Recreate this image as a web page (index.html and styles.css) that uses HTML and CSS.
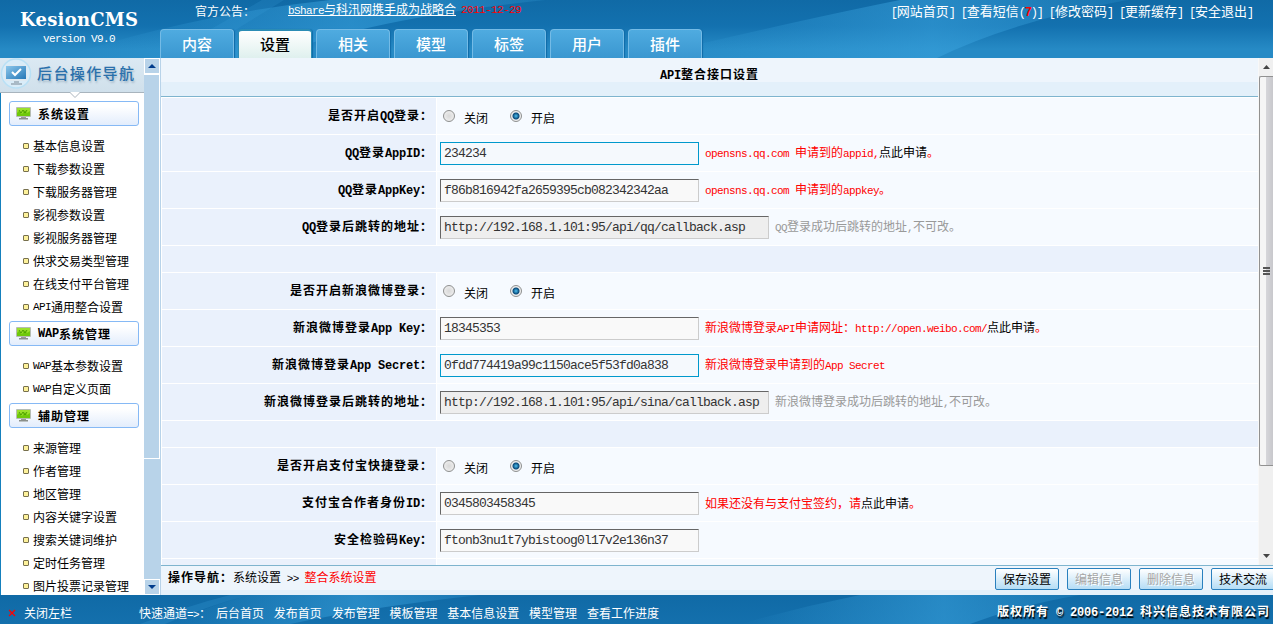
FILE: index.html
```html
<!DOCTYPE html>
<html lang="zh-CN">
<head>
  <meta charset="UTF-8" />
  <title>KesionCMS</title>
  <link rel="stylesheet" href="styles.css">
</head>
<body>
  <svg width="0" height="0" class="defs">
    <defs>
      <linearGradient id="screenBlue" x1="0" y1="0" x2="1" y2="1">
        <stop offset="0" stop-color="#8cc6ea"/><stop offset="1" stop-color="#2478b8"/>
      </linearGradient>
      <linearGradient id="glow" x1="0" y1="0" x2="1" y2="0">
        <stop offset="0" stop-color="#3aa3de" stop-opacity="0"/><stop offset=".6" stop-color="#3aa3de" stop-opacity=".55"/><stop offset="1" stop-color="#3aa3de" stop-opacity=".2"/>
      </linearGradient>
      <symbol id="pc" viewBox="0 0 15 13">
        <rect width="15" height="10" rx="1" fill="#b5bcb3"/>
        <rect x="1" y="1" width="13" height="8" fill="#6fc80a"/>
        <path d="M1 1h13v3l-3 2-2-3-3 4-3-3-2 2z" fill="#9be02c"/>
        <path d="M3 3l2 3 2-3 2 3 2-3" fill="none" stroke="#4da000"/>
        <rect x="5" y="10" width="5" height="1" fill="#999"/>
        <rect x="3" y="11" width="9" height="1.5" fill="#8a8f8a"/>
      </symbol>
    </defs>
  </svg>

  <div class="header">
    <svg class="wave" width="1273" height="58">
      <path d="M270 58Q360 20 545 0H330Q190 15 60 58z" fill="url(#glow)"/>
      <path d="M160 58L262 0h22L190 58z" fill="#3aa0da" opacity=".2"/>
      <path d="M937 58Q1010 22 1127 0H900Q800 20 640 58z" fill="url(#glow)"/>
    </svg>
    <div class="logo">
      <div class="name">KesionCMS</div>
      <div class="version en">version V9.0</div>
    </div>
    <div class="header-main">
      <div class="topline">
        <span class="notice">官方公告：</span>
        <a class="news"><span class="en">bShare</span>与科汛网携手成为战略合</a>
        <span class="date en">2011-12-29</span>
        <div class="toplinks">
          <a><i>[</i>网站首页<i>]</i></a>
          <a><i>[</i>查看短信<i>(<b>7</b>)]</i></a>
          <a><i>[</i>修改密码<i>]</i></a>
          <a><i>[</i>更新缓存<i>]</i></a>
          <a><i>[</i>安全退出<i>]</i></a>
        </div>
      </div>
      <div class="tabs">
        <a>内容</a>
        <a class="active">设置</a>
        <a>相关</a>
        <a>模型</a>
        <a>标签</a>
        <a>用户</a>
        <a>插件</a>
      </div>
    </div>
  </div>

  <div class="middle">
    <div class="sidebar">
      <div class="side-title">
        <svg width="32" height="32" viewBox="0 0 32 32">
          <circle cx="16" cy="15.5" r="14.5" fill="#d9ecf8" stroke="#b9e0f5" stroke-width="1.5"/>
          <rect x="5" y="7" width="22" height="16" rx="1" fill="#dfe9f0"/>
          <rect x="6" y="8" width="20" height="13" fill="url(#screenBlue)"/>
          <path d="M12 14l3 3 6-6" fill="none" stroke="#fff" stroke-width="2"/>
          <path d="M14 23h5v2h3v2H11v-2h3z" fill="#a9bac6"/>
        </svg>
        <span>后台操作导航</span>
        <svg class="notch" width="10" height="6"><path d="M0 0h10L5 5.5z" fill="#fff"/><path d="M0 .5L5 5.5 10 .5" fill="none" stroke="#aab4bd"/></svg>
      </div>
      <div class="menu">
        <h3><svg width="15" height="13"><use href="#pc"/></svg>系统设置</h3>
        <ul>
          <li>基本信息设置</li>
          <li>下载参数设置</li>
          <li>下载服务器管理</li>
          <li>影视参数设置</li>
          <li>影视服务器管理</li>
          <li>供求交易类型管理</li>
          <li>在线支付平台管理</li>
          <li><span class="en">API</span>通用整合设置</li>
        </ul>
        <h3><svg width="15" height="13"><use href="#pc"/></svg><span class="en">WAP</span>系统管理</h3>
        <ul>
          <li><span class="en">WAP</span>基本参数设置</li>
          <li><span class="en">WAP</span>自定义页面</li>
        </ul>
        <h3><svg width="15" height="13"><use href="#pc"/></svg>辅助管理</h3>
        <ul>
          <li>来源管理</li>
          <li>作者管理</li>
          <li>地区管理</li>
          <li>内容关键字设置</li>
          <li>搜索关键词维护</li>
          <li>定时任务管理</li>
          <li>图片投票记录管理</li>
        </ul>
      </div>
    </div>

    <div class="side-scroll">
      <div class="arrow"><svg width="8" height="4"><path d="M0 4L4 0l4 4z" fill="#003c8c"/></svg></div>
      <div class="thumb"></div>
      <div class="arrow down"><svg width="8" height="4"><path d="M0 0h8L4 4z" fill="#003c8c"/></svg></div>
    </div>

    <div class="main">
      <div class="frame">
        <div class="page">
          <div class="title"><span class="en">API</span>整合接口设置</div>
          <div class="form">
            <div class="row">
              <label>是否开启<span class="en">QQ</span>登录：</label>
              <div class="field"><span class="radio"></span><span class="opt">关闭</span><span class="radio on"></span><span class="opt">开启</span></div>
            </div>
            <div class="row">
              <label><span class="en">QQ</span>登录<span class="en">AppID</span>：</label>
              <div class="field"><input type="text" class="focus" value="234234"><span class="tips"><span class="en">opensns.qq.com </span>申请到的<span class="en">appid,</span><a>点此申请</a>。</span></div>
            </div>
            <div class="row">
              <label><span class="en">QQ</span>登录<span class="en">AppKey</span>：</label>
              <div class="field"><input type="text" value="f86b816942fa2659395cb082342342aa"><span class="tips"><span class="en">opensns.qq.com </span>申请到的<span class="en">appkey</span>。</span></div>
            </div>
            <div class="row">
              <label><span class="en">QQ</span>登录后跳转的地址：</label>
              <div class="field"><input type="text" class="long" readonly value="http://192.168.1.101:95/api/qq/callback.asp"><span class="tips gray"><span class="en">QQ</span>登录成功后跳转的地址<span class="en">,</span>不可改。</span></div>
            </div>
            <div class="space"></div>
            <div class="row">
              <label>是否开启新浪微博登录：</label>
              <div class="field"><span class="radio"></span><span class="opt">关闭</span><span class="radio on"></span><span class="opt">开启</span></div>
            </div>
            <div class="row">
              <label>新浪微博登录<span class="en">App Key</span>：</label>
              <div class="field"><input type="text" value="18345353"><span class="tips">新浪微博登录<span class="en">API</span>申请网址：<span class="en">http://open.weibo.com/</span><a>点此申请</a>。</span></div>
            </div>
            <div class="row">
              <label>新浪微博登录<span class="en">App Secret</span>：</label>
              <div class="field"><input type="text" class="focus" value="0fdd774419a99c1150ace5f53fd0a838"><span class="tips">新浪微博登录申请到的<span class="en">App Secret</span></span></div>
            </div>
            <div class="row">
              <label>新浪微博登录后跳转的地址：</label>
              <div class="field"><input type="text" class="long" readonly value="http://192.168.1.101:95/api/sina/callback.asp"><span class="tips gray">新浪微博登录成功后跳转的地址<span class="en">,</span>不可改。</span></div>
            </div>
            <div class="space"></div>
            <div class="row">
              <label>是否开启支付宝快捷登录：</label>
              <div class="field"><span class="radio"></span><span class="opt">关闭</span><span class="radio on"></span><span class="opt">开启</span></div>
            </div>
            <div class="row">
              <label>支付宝合作者身份<span class="en">ID</span>：</label>
              <div class="field"><input type="text" value="0345803458345"><span class="tips">如果还没有与支付宝签约，请<a>点此申请</a>。</span></div>
            </div>
            <div class="row">
              <label>安全检验码<span class="en">Key</span>：</label>
              <div class="field"><input type="text" value="ftonb3nu1t7ybistoog0l17v2e136n37"></div>
            </div>
            <div class="row">
              <label></label>
              <div class="field"></div>
            </div>
          </div>
        </div>
        <div class="page-scroll">
          <div class="sb-arrow"><svg width="7" height="4"><path d="M0 4L3.5 0 7 4z" fill="#444"/></svg></div>
          <div class="sb-thumb"><span></span><span></span><span></span></div>
          <div class="sb-arrow end"><svg width="7" height="4"><path d="M0 0h7L3.5 4z" fill="#444"/></svg></div>
        </div>
      </div>
      <div class="opbar">
        <div class="crumb"><b>操作导航：</b>系统设置 <span class="en">&gt;&gt;</span> <em>整合系统设置</em></div>
        <div class="btns">
          <button>保存设置</button>
          <button disabled>编辑信息</button>
          <button disabled>删除信息</button>
          <button>技术交流</button>
        </div>
      </div>
    </div>
  </div>

  <div class="footer">
    <svg class="wave" width="1273" height="29">
      <path d="M140 29Q190 10 230 0h20Q210 10 165 29z" fill="#3aa0da" opacity=".25"/>
      <path d="M290 29Q370 12 480 0H250Q210 10 170 29z" fill="url(#glow)"/>
      <path d="M970 29Q1020 10 1080 0H860Q800 12 740 29z" fill="url(#glow)"/>
    </svg>
    <svg class="close" width="8" height="8" viewBox="0 0 8 8">
      <line x1="1" y1="1" x2="7" y2="7" stroke="#f00" stroke-width="1.2"/>
      <line x1="7" y1="1" x2="1" y2="7" stroke="#f00" stroke-width="1.2"/>
    </svg>
    <a class="close-text">关闭左栏</a>
    <span class="quick">快速通道<span class="en">=&gt;</span>：</span>
    <div class="quick-links">
      <a>后台首页</a>
      <a>发布首页</a>
      <a>发布管理</a>
      <a>模板管理</a>
      <a>基本信息设置</a>
      <a>模型管理</a>
      <a>查看工作进度</a>
    </div>
    <div class="copyright">版权所有<span class="en"> © 2006-2012 </span>科兴信息技术有限公司</div>
  </div>
</body>
</html>
```
FILE: styles.css
```css
* {
  box-sizing: border-box;
}

body {
  margin: 0;
  width: 1273px;
  height: 624px;
  overflow: hidden;
  font: 12px/16px "Noto Sans CJK SC", sans-serif;
  color: #000;
  background: #fff;
}

.defs {
  position: absolute;
}

/* half-width latin, 6px a char (7px in bold text) */
.en {
  font-family: "Liberation Mono", monospace;
  font-size: 11px;
  letter-spacing: -0.6px;
  white-space: pre;
}

/* header */
.header {
  position: relative;
  display: flex;
  height: 58px;
  color: #fff;
  background: linear-gradient(#106aa6, #1371af 45%, #268ac5 85%);
  overflow: hidden;
}

.wave {
  position: absolute;
  left: 0;
  top: 0;
}

.logo {
  position: relative;
  width: 160px;
  padding: 9px 0 0 20px;
}

.logo .name {
  font: bold 18px/22px "DejaVu Serif", serif;
  letter-spacing: 0.25px;
  white-space: nowrap;
}

.logo .version {
  padding: 0 0 0 23px;
  line-height: 16px;
}

.header-main {
  position: relative;
  flex: 1;
}

.topline {
  display: flex;
  height: 29px;
  padding-left: 35px;
  line-height: 22px;
}

.notice {
  width: 93px;
}

.news {
  height: 16px;
  margin-right: 5px;
  line-height: 18px;
  border-bottom: 1px solid #fff;
}

.date {
  color: #f00;
  line-height: 20px;
}

.toplinks {
  display: flex;
  gap: 6px;
  margin-left: auto;
  padding-right: 20px;
  font-size: 13px;
  line-height: 21px;
}

.toplinks i {
  font: 12px/21px "Liberation Mono", monospace;
  letter-spacing: -1.2px;
}

.toplinks b {
  color: #f00;
}

.tabs {
  display: flex;
  gap: 4px;
}

.tabs a {
  width: 74px;
  height: 29px;
  border: 1px solid #74bbe6;
  border-bottom: 0;
  border-radius: 4px 4px 0 0;
  box-shadow: 1px 0 1px #0f6ba8;
  background: linear-gradient(#4fabe0, #3a97d0);
  font-size: 15px;
  font-weight: 500;
  line-height: 27px;
  text-align: center;
}

.tabs .active {
  border-color: #2b8cb5;
  border-top-width: 2px;
  background: linear-gradient(#fff, #dff0ee);
  color: #000;
  line-height: 25px;
}

/* middle */
.middle {
  display: flex;
  height: 537px;
}

.sidebar {
  width: 144px;
  overflow: hidden;
}

.side-title {
  position: relative;
  display: flex;
  height: 35px;
  border-bottom: 1px solid #a8b4bd;
  background: linear-gradient(#dbe9f3, #d0e0eb);
}

.side-title span {
  padding-left: 5px;
  font-size: 15px;
  letter-spacing: 1.4px;
  font-weight: 500;
  line-height: 29px;
  color: #2a70ab;
  text-shadow: 1px 2px 2px #a9bccb;
}

.notch {
  position: absolute;
  left: 70px;
  top: 34px;
}

.menu {
  height: 502px;
  padding: 8px 5px 0 8px;
  border-left: 1px solid #1580bd;
}

.menu h3 {
  display: flex;
  align-items: center;
  height: 25px;
  margin: 0;
  padding-left: 6px;
  border: 1px solid #86b9f5;
  border-radius: 3px;
  background: linear-gradient(#fff 20%, #e3edfc);
  font-size: 12px;
  letter-spacing: 1px;
}

.menu h3 svg {
  margin-right: 7px;
}

.menu ul {
  margin: 0;
  padding: 8px 0 3px 14px;
  list-style: none;
}

.menu li {
  display: flex;
  align-items: center;
  height: 23px;
  white-space: nowrap;
}

.menu li::before {
  content: "";
  width: 6px;
  height: 6px;
  margin-right: 4px;
  border: 1px solid #77704e;
  border-radius: 1px;
  background: #fdf19a;
  box-sizing: border-box;
}

.menu h3 .en,
.row label .en,
.title .en,
.copyright .en {
  font-size: 12px;
  letter-spacing: -0.2px;
}

.side-scroll {
  display: flex;
  flex-direction: column;
  width: 16px;
  background: #b8d3e9;
}

.arrow {
  display: flex;
  align-items: center;
  justify-content: center;
  height: 16px;
  border: 1px solid #fff;
}

.arrow.down {
  margin-top: auto;
}

.thumb {
  height: 385px;
  border: 1px solid #fff;
  border-left: 0;
}

.main {
  display: flex;
  flex-direction: column;
  width: 1113px;
  border-left: 1px solid #b8d3e9;
}

.frame {
  display: flex;
  height: 507px;
}

.page {
  width: 1097px;
  overflow: hidden;
}

.title {
  height: 39px;
  border-bottom: 1px solid #7eb4ce;
  background: linear-gradient(#eef5fc 24px, #e3f0fa 24px);
  font-weight: bold;
  line-height: 32px;
  letter-spacing: 1px;
  text-align: center;
}

.form {
  padding: 1px 0 0 1px;
}

.row {
  display: flex;
  height: 37px;
  border-bottom: 1px solid #fff;
}

.row label {
  width: 274px;
  padding-right: 3px;
  background: #eaf1fc;
  font-weight: bold;
  letter-spacing: 1px;
  line-height: 34px;
  text-align: right;
}

.field {
  display: flex;
  align-items: center;
  flex: 1;
  margin-left: 1px;
  padding-left: 3px;
  background: #f6faff;
}

.field input {
  width: 259px;
  height: 23px;
  margin-top: 1px;
  padding: 0 3px;
  border: 1px solid #ccc;
  border-top-color: #666;
  border-left-color: #666;
  background: #f9f9f9;
  color: #333;
  font: 13px "Liberation Mono", monospace;
  letter-spacing: -0.8px;
  outline: none;
}

.field .focus {
  border-color: #09c;
  background: #f5f9fd;
}

.field .long {
  width: 329px;
  background: #eee;
}

.tips {
  padding-left: 6px;
  color: #f00;
}

.tips a {
  color: #000;
}

.gray {
  color: #999;
}

.space {
  height: 27px;
  border-bottom: 1px solid #fff;
  background: #eaf1fc;
}

.radio {
  width: 12px;
  height: 12px;
  margin: 0 9px 0 3px;
  border: 1px solid #8e8f8f;
  border-radius: 50%;
  background: radial-gradient(#d8d8d8, #f4f4f4);
}

.radio.on {
  background: radial-gradient(circle at 50% 50%, #4cc0f0 0, #0a4a7a 3px, #eee 4px);
}

.opt {
  width: 43px;
  padding-top: 3px;
}

.page-scroll {
  display: flex;
  flex-direction: column;
  width: 15px;
  border-left: 1px solid #f8f8f8;
  background: #f0f0f0;
}

.sb-arrow {
  display: flex;
  align-items: center;
  justify-content: center;
  height: 18px;
}

.sb-arrow.end {
  margin-top: auto;
}

.sb-thumb {
  display: flex;
  flex-direction: column;
  align-items: center;
  justify-content: center;
  gap: 1px;
  height: 390px;
  border: 1px solid #919191;
  border-right: 0;
  border-radius: 2px 0 0 2px;
  background: linear-gradient(90deg, #f5f5f5 45%, #d5d5d9 50%, #c8c8cc);
}

.sb-thumb span {
  width: 7px;
  height: 2px;
  background: #555;
}

.opbar {
  display: flex;
  height: 30px;
  border-top: 1px solid #7eb4ce;
  background: linear-gradient(#eef5fc 24px, #e3f0fa 24px);
  overflow: hidden;
}

.crumb {
  flex: none;
  width: 834px;
  padding-left: 7px;
  line-height: 22px;
  word-spacing: 3px;
}

.crumb b {
  letter-spacing: 1px;
}

.crumb em {
  color: #f00;
  font-style: normal;
}

.btns {
  display: flex;
  gap: 8px;
  padding-top: 2px;
}

.btns button {
  flex: none;
  width: 64px;
  height: 22px;
  padding: 0;
  border: 1px solid #2a80be;
  border-radius: 2px;
  background: linear-gradient(#fff, #b5ddf5);
  color: #000;
  font: 12px/18px "Noto Sans CJK SC", sans-serif;
}

.btns button:disabled {
  color: #a5a5a5;
  text-shadow: 1px 1px #fff;
}

/* footer */
.footer {
  position: relative;
  display: flex;
  height: 29px;
  background: linear-gradient(#106aa6, #1470ad);
  color: #fff;
  line-height: 35px;
  overflow: hidden;
}

.close {
  position: relative;
  flex: none;
  margin: 14px 8px 0;
}

.close-text,
.quick,
.quick-links,
.copyright {
  position: relative;
}

.close-text {
  width: 115px;
}

.quick {
  width: 77px;
}

.quick-links {
  display: flex;
  gap: 9.8px;
}

.copyright {
  margin-left: auto;
  padding-right: 3px;
  font-weight: bold;
  line-height: 32px;
  letter-spacing: 1px;
  text-shadow: 1px 2px 1px #000;
}
```
